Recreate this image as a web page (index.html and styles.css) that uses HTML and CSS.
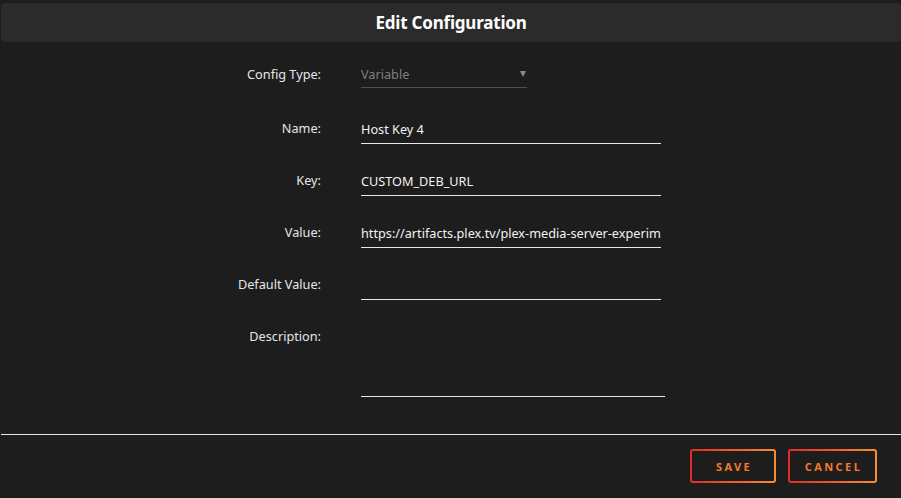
FILE: index.html
```html
<!doctype html>
<html>
<head>
<meta charset="utf-8">
<title>Edit Configuration</title>
<link rel="stylesheet" href="styles.css">
</head>
<body>

<div class="dialog">
	<div class="dialog-head">Edit Configuration</div>

	<div class="form">
		<div class="row row-type">
			<label class="lbl">Config Type:</label>
			<div class="select">
				<span>Variable</span>
				<span class="arrow"></span>
			</div>
		</div>
		<div class="row">
			<label class="lbl">Name:</label>
			<input class="field" type="text" value="Host Key 4">
		</div>
		<div class="row">
			<label class="lbl">Key:</label>
			<input class="field" type="text" value="CUSTOM_DEB_URL">
		</div>
		<div class="row">
			<label class="lbl">Value:</label>
			<input class="field" type="text" value="https://artifacts.plex.tv/plex-media-server-experimental/1.32.0.6918-6f393eda1/debian/plexmediaserver_1.32.0.6918-6f393eda1_amd64.deb">
		</div>
		<div class="row">
			<label class="lbl">Default Value:</label>
			<input class="field" type="text" value="">
		</div>
		<div class="row row-last">
			<label class="lbl">Description:</label>
			<textarea class="field area"></textarea>
		</div>
	</div>

	<div class="foot">
		<button class="btn">SAVE</button>
		<button class="btn">CANCEL</button>
	</div>
</div>

</body>
</html>
```

FILE: styles.css
```css
*{ margin:0; padding:0; box-sizing:border-box;}
body{ background:#1d1d1d; color:#ececec; font-family:"Noto Sans","Liberation Sans",sans-serif; font-size:12.7px;}

.dialog{ width:901px; height:498px; padding-top:3px;}
.dialog-head{ margin-left:1px; height:39px; line-height:39px; background:#2b2b2b; border-radius:4px; text-align:center; font-size:17px; font-weight:bold; color:#fff; letter-spacing:-0.2px;}

.form{ padding-top:22px; padding-left:201px; padding-bottom:37px;}
.row{ display:flex; align-items:flex-start; margin-bottom:26px;}
.row-type{ margin-bottom:30px;}
.row-last{ margin-bottom:0;}
.lbl{ width:120px; text-align:right; line-height:21px; color:#e6e6e6;}

.select{ margin-left:40px; width:166px; height:24px; line-height:21px; border-bottom:1px solid #4f4f4f; display:flex; justify-content:space-between; color:#7f7f7f;}
.select .arrow{ width:0; height:0; margin:7px 1px 0 0; border-left:3px solid transparent; border-right:3px solid transparent; border-top:6px solid #8a8a8a;}

.field{ display:block; margin-left:40px; width:300px; height:26px; line-height:21px; padding:0 0 4px; border:0; border-bottom:1px solid #e8e8e8; background:transparent; outline:none; color:#f2f2f2; font:inherit; resize:none;}
.field.area{ width:304px; height:71px;}

.foot{ margin-left:1px; border-top:1px solid #e6e6e6; padding:14px 24px 0 0; display:flex; justify-content:flex-end; gap:12px;}
.btn{ height:34px; padding:0 0 0 2px; border:2px solid transparent; border-radius:3px; background:linear-gradient(#1d1d1d,#1d1d1d) padding-box, linear-gradient(90deg,#e32a28,#f98d2e) border-box; color:#f47b2a; font-family:"Noto Sans","Liberation Sans",sans-serif; font-size:11px; font-weight:bold; letter-spacing:2.4px;}
.btn:first-child{ width:86px;}
.btn:last-child{ width:89px;}
```
